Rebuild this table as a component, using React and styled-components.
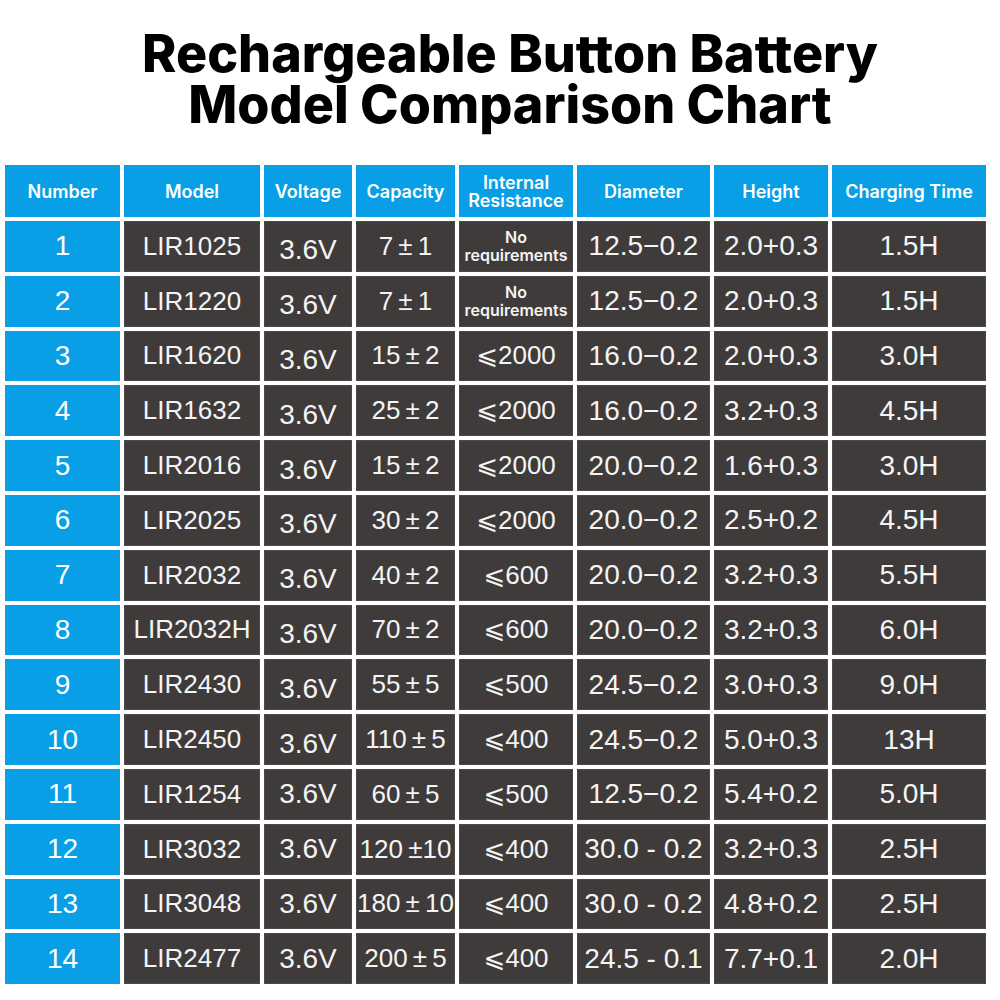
import styled, { createGlobalStyle } from "styled-components"

const GlobalStyle = createGlobalStyle`
    html, body {
        margin: 0;
        padding: 0;
        background: #ffffff;
    }
    body {
        width: 1000px;
        height: 1000px;
        overflow: hidden;
    }
`

const COLUMNS = [
    { label: "Number", width: 115 },
    { label: "Model", width: 136, size: 26 },
    { label: "Voltage", width: 88 },
    { label: "Capacity", width: 99, size: 26 },
    { label: "Internal Resistance", width: 114, twoLines: true, size: 26 },
    { label: "Diameter", width: 133 },
    { label: "Height", width: 114 },
    { label: "Charging Time", width: 154 },
]

// thin spaces round the ± sign, as in the chart
const pm = (a, b) => `${a}\u2009±\u2009${b}`

const ROWS = [
    ["1", "LIR1025", "3.6V", pm(7, 1), "NR", "12.5−0.2", "2.0+0.3", "1.5H"],
    ["2", "LIR1220", "3.6V", pm(7, 1), "NR", "12.5−0.2", "2.0+0.3", "1.5H"],
    ["3", "LIR1620", "3.6V", pm(15, 2), "⩽2000", "16.0−0.2", "2.0+0.3", "3.0H"],
    ["4", "LIR1632", "3.6V", pm(25, 2), "⩽2000", "16.0−0.2", "3.2+0.3", "4.5H"],
    ["5", "LIR2016", "3.6V", pm(15, 2), "⩽2000", "20.0−0.2", "1.6+0.3", "3.0H"],
    ["6", "LIR2025", "3.6V", pm(30, 2), "⩽2000", "20.0−0.2", "2.5+0.2", "4.5H"],
    ["7", "LIR2032", "3.6V", pm(40, 2), "⩽600", "20.0−0.2", "3.2+0.3", "5.5H"],
    ["8", "LIR2032H", "3.6V", pm(70, 2), "⩽600", "20.0−0.2", "3.2+0.3", "6.0H"],
    ["9", "LIR2430", "3.6V", pm(55, 5), "⩽500", "24.5−0.2", "3.0+0.3", "9.0H"],
    ["10", "LIR2450", "3.6V", pm(110, 5), "⩽400", "24.5−0.2", "5.0+0.3", "13H"],
    ["11", "LIR1254", "3.6V", pm(60, 5), "⩽500", "12.5−0.2", "5.4+0.2", "5.0H"],
    ["12", "LIR3032", "3.6V", "120\u2009±10", "⩽400", "30.0 - 0.2", "3.2+0.3", "2.5H"],
    ["13", "LIR3048", "3.6V", pm(180, 10), "⩽400", "30.0 - 0.2", "4.8+0.2", "2.5H"],
    ["14", "LIR2477", "3.6V", pm(200, 5), "⩽400", "24.5 - 0.1", "7.7+0.1", "2.0H"],
]

const App = () => {
    return (
        <PAGE>
            <GlobalStyle />
            <TITLE>
                Rechargeable Button Battery
                <br />
                Model Comparison Chart
            </TITLE>
            <TABLE>
                {COLUMNS.map((col) => (
                    <HEAD key={col.label}>
                        {col.twoLines ? (
                            <>
                                Internal
                                <br />
                                Resistance
                            </>
                        ) : (
                            col.label
                        )}
                    </HEAD>
                ))}
                {ROWS.map((row, r) =>
                    row.map((value, i) =>
                        i === 0 ? (
                            <NUMBER key={row[0] + i}>{value}</NUMBER>
                        ) : value === "NR" ? (
                            <CELL key={row[0] + i}>
                                <NOTE>
                                    No
                                    <br />
                                    requirements
                                </NOTE>
                            </CELL>
                        ) : (
                            <CELL
                                key={row[0] + i}
                                $size={COLUMNS[i].size}
                                $low={i === 2 && r < 10}
                            >
                                {value}
                            </CELL>
                        )
                    )
                )}
            </TABLE>
        </PAGE>
    )
}

// styled components

const PAGE = styled.div`
    width: 1000px;
    height: 1000px;
    display: flex;
    flex-direction: column;
    align-items: flex-start;
`
const TITLE = styled.h1`
    margin: 28px 0 0 0;
    width: 1000px;
    padding-left: 20px;
    box-sizing: border-box;
    text-align: center;
    font-family: Inter, "Noto Sans", sans-serif;
    font-weight: 800;
    font-size: 52px;
    line-height: 51px;
    color: #000000;
`
const TABLE = styled.div`
    margin: 35px 0 0 5px;
    display: grid;
    grid-template-columns: ${COLUMNS.map((c) => c.width + "px").join(" ")};
    grid-template-rows: 52px;
    grid-auto-rows: 50.8px;
    gap: 4px;
`
const BASE = styled.div`
    display: flex;
    align-items: center;
    justify-content: center;
    text-align: center;
    color: #ffffff;
    box-sizing: border-box;
`
const HEAD = styled(BASE)`
    background: #089fe6;
    font-family: Inter, "Noto Sans", sans-serif;
    font-weight: 600;
    font-size: 18px;
    line-height: 18px;
    padding-top: 2px;
`
const NUMBER = styled(BASE)`
    background: #089fe6;
    font-family: "Liberation Sans", Arial, sans-serif;
    font-size: 28px;
`
const CELL = styled(BASE)`
    background: #3f3b3a;
    border: 1px solid #4c4948;
    font-family: "Liberation Sans", "DejaVu Sans", Arial, sans-serif;
    font-size: ${(p) => (p.$size || 28)}px;
    padding-top: ${(p) => (p.$low ? "8px" : "0")};
    color: #f4f4f4;
    white-space: pre;
`
const NOTE = styled.span`
    font-family: Inter, "Noto Sans", sans-serif;
    font-weight: 600;
    font-size: 16px;
    line-height: 18px;
    white-space: normal;
`

export default App
